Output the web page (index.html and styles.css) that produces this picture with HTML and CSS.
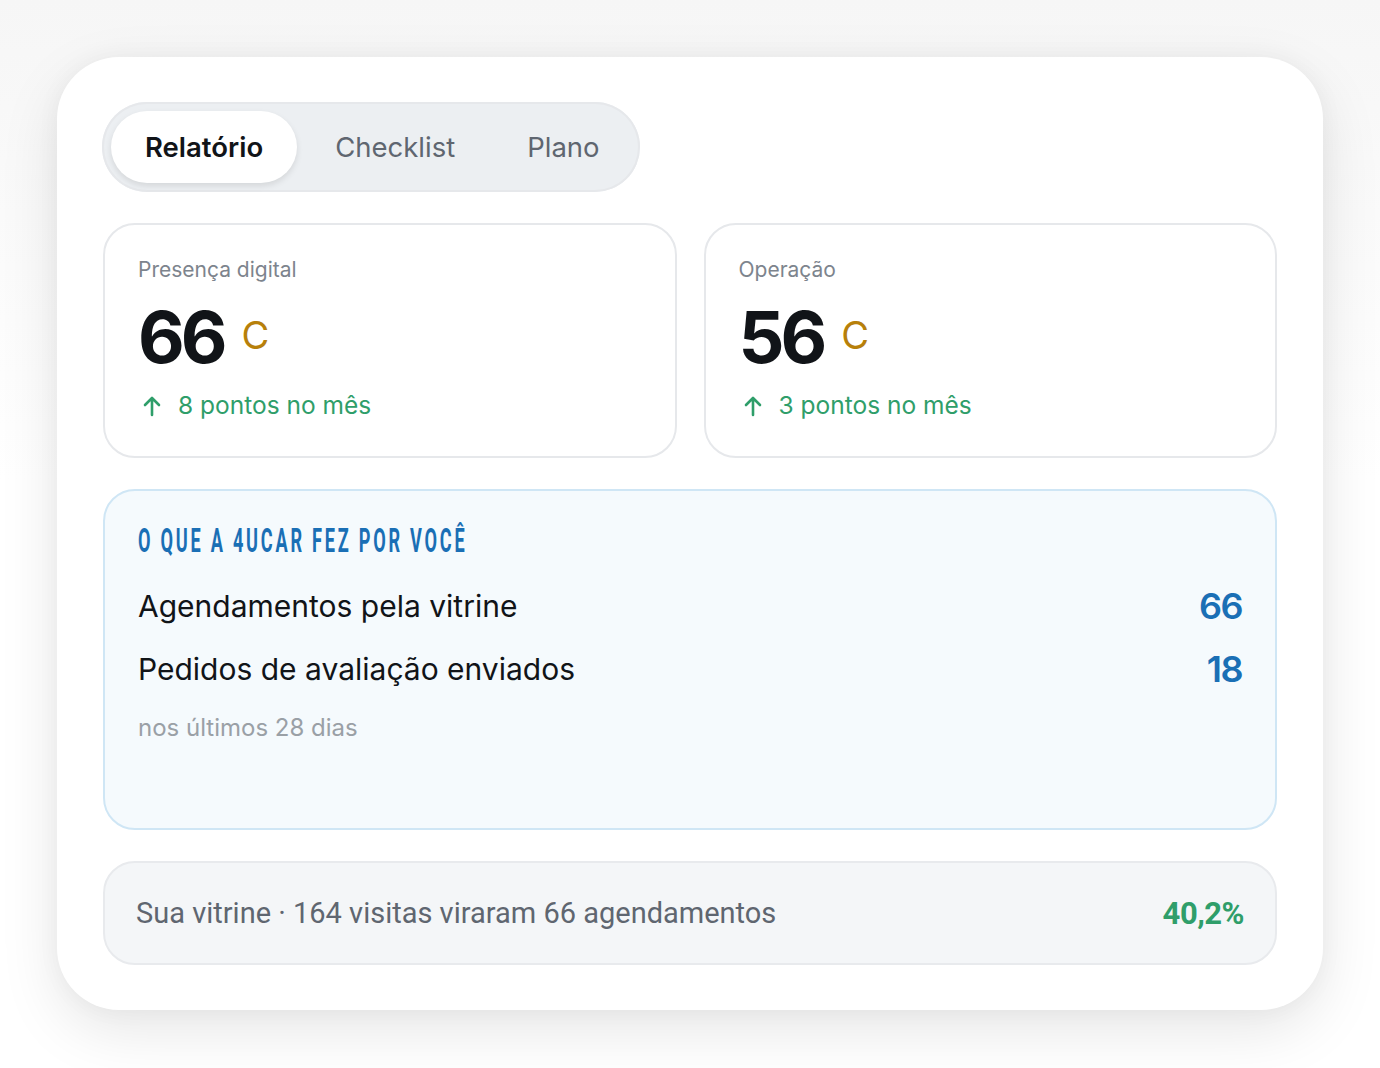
FILE: index.html
```html
<!DOCTYPE html>
<html lang="pt">
<head>
<meta charset="utf-8">
<link rel="stylesheet" href="styles.css">
</head>
<body>
<div class="stage">
  <div class="panel">
    <div class="tabs">
      <div class="tab active">Relatório</div>
      <div class="tab">Checklist</div>
      <div class="tab">Plano</div>
    </div>
    <div class="scores">
      <div class="score">
        <div class="score-label">Presença digital</div>
        <div class="score-value"><span class="num">66</span><span class="grade">C</span></div>
        <div class="delta">
          <svg class="arrow" viewBox="0 0 20 22" width="20" height="22"><path d="M10 20V3M3 10l7-7 7 7" fill="none" stroke="currentColor" stroke-width="2.6" stroke-linecap="round" stroke-linejoin="round"/></svg>
          <span>8 pontos no mês</span>
        </div>
      </div>
      <div class="score">
        <div class="score-label">Operação</div>
        <div class="score-value"><span class="num">56</span><span class="grade">C</span></div>
        <div class="delta">
          <svg class="arrow" viewBox="0 0 20 22" width="20" height="22"><path d="M10 20V3M3 10l7-7 7 7" fill="none" stroke="currentColor" stroke-width="2.6" stroke-linecap="round" stroke-linejoin="round"/></svg>
          <span>3 pontos no mês</span>
        </div>
      </div>
    </div>
    <div class="did">
      <div class="did-title"><span>O QUE A 4UCAR FEZ POR VOCÊ</span></div>
      <div class="did-row"><span>Agendamentos pela vitrine</span><span class="did-num">66</span></div>
      <div class="did-row"><span>Pedidos de avaliação enviados</span><span class="did-num">18</span></div>
      <div class="did-note">nos últimos 28 dias</div>
    </div>
    <div class="showcase">
      <span class="showcase-text">Sua vitrine · 164 visitas viraram 66 agendamentos</span>
      <span class="showcase-pct">40,2%</span>
    </div>
  </div>
</div>
</body>
</html>
```
FILE: styles.css
```css
* { box-sizing: border-box; }
html, body { margin: 0; padding: 0; background: #fafafa; }
body { font-family: "Inter", "Lato", sans-serif; color: #111418; }
.stage {
  width: 1380px; height: 1068px;
  padding: 57px 57px 0 57px;
  background: linear-gradient(#f6f6f6, #ffffff 45%);
}
.panel {
  width: 1266px; height: 953px;
  background: #fff;
  border-radius: 62px;
  box-shadow: 0 20px 60px rgba(0,0,0,0.10), 0 0 24px rgba(0,0,0,0.04);
  padding: 45px 45px 0 45px;
}
.tabs {
  display: inline-flex; align-items: center;
  height: 90px; padding: 0 9px;
  background: #eceff2;
  border-radius: 45px;
  box-shadow: inset 0 0 0 2px #e6e8eb;
}
.tab {
  height: 72px; display: flex; align-items: center;
  padding: 0 34px;
  font-size: 27.5px; color: #5f6670;
  border-radius: 36px;
}
.tab:nth-child(2) { padding: 0 36px 0 38px; }
.tab:nth-child(3) { padding: 0 31px 0 36px; }
.tab.active {
  background: #fff; color: #111418; font-weight: 600;
  box-shadow: 0 3px 6px rgba(0,0,0,0.10);
}
.scores {
  display: grid; grid-template-columns: 1fr 1fr; gap: 27px;
  margin-top: 31px; width: 1174px; margin-left: 1px;
}
.score {
  height: 235px;
  border: 2px solid #e6e8eb; border-radius: 32px;
  padding: 31px 33px 0 33px;
}
.score-label { font-size: 21px; color: #7d848d; line-height: 28px; }
.score-value { display: flex; align-items: center; margin-top: 15px; height: 76px; }
.num { font-size: 72px; font-weight: 700; line-height: 76px; letter-spacing: -4px; color: #111418; }
.grade { font-size: 38px; color: #b7800a; margin-left: 18px; margin-top: -4px; }
.delta { display: flex; align-items: center; gap: 16px; margin-top: 15px; color: #2f9e6a; font-size: 24.5px; }
.arrow { margin-left: 4px; margin-top: 2px; }
.did {
  margin-top: 31px; margin-left: 1px; width: 1174px; height: 341px;
  background: #f5fafd; border: 2px solid #cfe6f5; border-radius: 32px;
  padding: 34px 31px 0 33px;
}
.did-title { height: 32px; line-height: 32px; }
.did-title span {
  display: inline-block;
  font-family: "Roboto", sans-serif;
  font-weight: 700; font-size: 33px; letter-spacing: 5px;
  color: #1a6fb5;
  transform: scaleX(0.55); transform-origin: left center;
  white-space: nowrap;
}
.did-row {
  display: flex; justify-content: space-between; align-items: center;
  font-size: 30px; line-height: 40px; color: #111418;
  margin-top: 29px; padding-right: 2px;
}
.did-row + .did-row { margin-top: 23px; }
.did-num { font-size: 36px; font-weight: 600; color: #1a6fb5; letter-spacing: -1.5px; }
.did-note { font-size: 24px; color: #9aa0a6; margin-top: 24px; }
.showcase {
  margin-top: 31px; margin-left: 1px; width: 1174px; height: 104px;
  background: #f4f6f8; border: 2px solid #e8eaed; border-radius: 32px;
  display: flex; justify-content: space-between; align-items: center;
  padding: 0 31px 0 31px;
}
.showcase-text { font-family: "Roboto", sans-serif; font-size: 29px; color: #5f6670; }
.showcase-pct { font-family: "Roboto", sans-serif; font-weight: 700; font-size: 31px; color: #2f9e6a; letter-spacing: -0.5px; }
```
